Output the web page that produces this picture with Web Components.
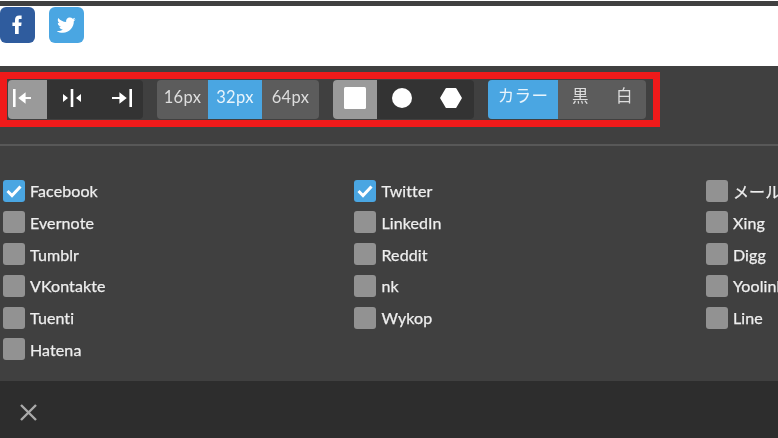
<!DOCTYPE html>
<html lang="ja">
<head>
<meta charset="utf-8">
<title>Share buttons</title>
<style>
  html, body { margin: 0; height: 100%; overflow: hidden; background: #404040; }
  body { font-family: Lato, "Noto Sans CJK JP", sans-serif; color: #eee; }
  share-page { width: 778px; height: 438px; }
</style>
</head>
<body>
<share-page></share-page>
<script>
const ICONS = {
  left: '<rect x="0" y="0" width="2.600" height="18" fill="#fff"/><path d="M7 9h11M7 9l4.500-3.500v7z" stroke="#fff" stroke-width="2.200" fill="#fff"/>',
  center: '<rect x="8.700" y="0" width="2.600" height="18" fill="#fff"/><path d="M1 5l5 4-5 4zM19 5l-5 4 5 4z" fill="#fff"/>',
  right: '<rect x="17.400" y="0" width="2.600" height="18" fill="#fff"/><path d="M0 9h11M13 9l-4.500-3.500v7z" stroke="#fff" stroke-width="2.200" fill="#fff"/>',
  square: '<rect x="0" y="0" width="22" height="22" rx="1.500" fill="#fff"/>',
  circle: '<circle cx="11" cy="11" r="10" fill="#fff"/>',
  hexagon: '<path d="M6.500 1h9a1 1 0 0 1 .9.500L22 11l-5.600 9.500a1 1 0 0 1-.9.500h-9a1 1 0 0 1-.9-.500L0 11l5.600-9.500a1 1 0 0 1 .9-.500z" fill="#fff"/>'
};

// One social logo tile on the white preview strip.
class ShareTile extends HTMLElement {
  connectedCallback() {
    const isFacebook = this.getAttribute('kind') === 'facebook';
    this.attachShadow({ mode: 'open' }).innerHTML = `
      <style>
        :host { display: block; width: 35px; height: 36px; border-radius: 6px; background: ${isFacebook ? '#2f5c9e' : '#4aa6e2'}; }
        svg { display: block; width: 35px; height: 36px; }
      </style>
      <svg viewBox="0 0 35 36">${isFacebook
        ? '<path d="M15 27V19h-2.600v-3.600H15v-2.600c0-3 1.600-4.400 4.200-4.400h2.400v3.500h-1.600c-1 0-1.300.5-1.300 1.300v2.200h2.900l-.4 3.600h-2.500v8z" fill="#fff"/>'
        : '<path d="M8 24c2.200.2 4.100-.4 5.800-1.600-1.800-.1-3-1.100-3.600-2.700.6.100 1.100.1 1.700-.1-1.900-.5-3.100-1.900-3.100-3.900.6.300 1.100.5 1.700.5-1.700-1.300-2.200-3.200-1.200-5.100 2.100 2.500 4.700 3.800 7.900 4-.5-2.800 1.300-4.600 3.700-4.600 1.100 0 2 .4 2.800 1.200.9-.2 1.700-.5 2.400-.9-.3.900-.9 1.600-1.600 2.100.8-.1 1.500-.3 2.200-.6-.5.800-1.200 1.500-1.900 2 .3 6.200-5 11.600-11.100 11.400-2.100 0-4-.5-5.700-1.500z" fill="#fff"/>'}
      </svg>`;
  }
}
customElements.define('share-tile', ShareTile);

// Toolbar button: holds text through the slot or an icon named by the icon attribute.
class ToolButton extends HTMLElement {
  connectedCallback() {
    const icon = this.getAttribute('icon');
    const isAlign = icon === 'left' || icon === 'center' || icon === 'right';
    const size = isAlign ? 'width="20" height="18"' : 'width="22" height="22"';
    const box = isAlign ? '0 0 20 18' : '0 0 22 22';
    this.attachShadow({ mode: 'open' }).innerHTML = `
      <style>
        :host { display: flex; align-items: center; justify-content: center; box-sizing: border-box; height: 39px; padding: 0 var(--pr, 0) var(--pb, 3px) var(--pl, 0); width: var(--w, 48px); color: #ddd; font-size: 16.500px; letter-spacing: .3px; }
        :host([state="on"]) { background: #9a9a9a; }
        :host([state="blue"]) { background: #4aa6e2; color: #e8f4fc; }
        svg { display: block; }
      </style>
      ${icon ? `<svg ${size} viewBox="${box}">${ICONS[icon]}</svg>` : '<slot></slot>'}`;
  }
}
customElements.define('tool-button', ToolButton);

// Rounded run of tool buttons; tone picks the dark or the mid grey background.
class ToolGroup extends HTMLElement {
  connectedCallback() {
    const bg = this.getAttribute('tone') === 'mid' ? '#5c5c5c' : '#333';
    this.attachShadow({ mode: 'open' }).innerHTML = `
      <style>
        :host { display: flex; border-radius: 4px; overflow: hidden; background: ${bg}; }
      </style>
      <slot></slot>`;
  }
}
customElements.define('tool-group', ToolGroup);

class ShareToolbar extends HTMLElement {
  connectedCallback() {
    this.attachShadow({ mode: 'open' }).innerHTML = `
      <style>
        :host { display: flex; gap: 14px; box-sizing: border-box; width: 660px; height: 55px; padding: 1px; border: 7px solid #f01a1a; margin-top: 6px; }
      </style>
      <slot></slot>`;
  }
}
customElements.define('share-toolbar', ShareToolbar);

class CheckItem extends HTMLElement {
  connectedCallback() {
    const checked = this.hasAttribute('checked');
    this.attachShadow({ mode: 'open' }).innerHTML = `
      <style>
        :host { display: flex; align-items: center; gap: 5.500px; height: 22px; white-space: nowrap; font-size: 16px; letter-spacing: .1px; color: #eee; -webkit-text-stroke: .25px #eee; }
        .box { flex: none; width: 22px; height: 22px; border-radius: 3px; background: ${checked ? '#4aa6e2' : '#929292'}; }
        svg { display: block; }
      </style>
      <div class="box">${checked ? '<svg width="22" height="22" viewBox="0 0 22 22"><path d="M4.500 11l4.500 4.500 8.500-9" fill="none" stroke="#fff" stroke-width="3"/></svg>' : ''}</div>
      <slot></slot>`;
  }
}
customElements.define('check-item', CheckItem);

const COLUMNS = [
  [['Facebook', true], ['Evernote'], ['Tumblr'], ['VKontakte'], ['Tuenti'], ['Hatena']],
  [['Twitter', true], ['LinkedIn'], ['Reddit'], ['nk'], ['Wykop']],
  [['メール'], ['Xing'], ['Digg'], ['Yoolink'], ['Line']]
];

class ServiceList extends HTMLElement {
  connectedCallback() {
    const columns = COLUMNS.map(col => `<div class="col">${col.map(([name, on]) =>
      `<check-item${on ? ' checked' : ''}>${name}</check-item>`).join('')}</div>`).join('');
    this.attachShadow({ mode: 'open' }).innerHTML = `
      <style>
        :host { display: grid; grid-template-columns: 351.500px 351.500px 351.500px; flex: 1; padding: 33.500px 0 0 2.500px; border-top: 2px solid #585858; margin-top: 17px; }
        .col { display: flex; flex-direction: column; gap: 9.800px; }
      </style>
      ${columns}`;
  }
}
customElements.define('service-list', ServiceList);

class ShareFooter extends HTMLElement {
  connectedCallback() {
    this.attachShadow({ mode: 'open' }).innerHTML = `
      <style>
        :host { display: flex; align-items: center; box-sizing: border-box; height: 57px; padding: 6px 0 0 20px; background: #2d2d2d; }
        svg { display: block; }
      </style>
      <svg width="17" height="17" viewBox="0 0 17 17"><path d="M1 1l15 15M16 1L1 16" stroke="#aaa" stroke-width="2.400"/></svg>`;
  }
}
customElements.define('share-footer', ShareFooter);

class SharePage extends HTMLElement {
  connectedCallback() {
    this.attachShadow({ mode: 'open' }).innerHTML = `
      <style>
        :host { display: flex; flex-direction: column; background: #404040; overflow: hidden; filter: blur(.35px); }
        .top { height: 1px; background: #fff; }
        .rule { height: 5px; background: #404040; }
        .preview { display: flex; gap: 14px; height: 60px; box-sizing: border-box; padding: 1px 0 0 0; background: #fff; }
      </style>
      <div class="top"></div>
      <div class="rule"></div>
      <div class="preview">
        <share-tile kind="facebook"></share-tile>
        <share-tile kind="twitter"></share-tile>
      </div>
      <share-toolbar>
        <tool-group>
          <tool-button icon="left" state="on" style="--w:39px;--pr:9px"></tool-button>
          <tool-button icon="center" style="--w:50px"></tool-button>
          <tool-button icon="right" style="--w:46px;--pl:4px"></tool-button>
        </tool-group>
        <tool-group tone="mid" style="--pb:6px">
          <tool-button style="--w:51px">16px</tool-button>
          <tool-button state="blue" style="--w:54px">32px</tool-button>
          <tool-button style="--w:57px">64px</tool-button>
        </tool-group>
        <tool-group>
          <tool-button icon="square" state="on" style="--w:44px"></tool-button>
          <tool-button icon="circle" style="--w:50px"></tool-button>
          <tool-button icon="hexagon" style="--w:47px"></tool-button>
        </tool-group>
        <tool-group tone="mid" style="--pb:9px">
          <tool-button state="blue" style="--w:70px">カラー</tool-button>
          <tool-button style="--w:45px">黒</tool-button>
          <tool-button style="--w:43px">白</tool-button>
        </tool-group>
      </share-toolbar>
      <service-list></service-list>
      <share-footer></share-footer>`;
  }
}
customElements.define('share-page', SharePage);
</script>
</body>
</html>
